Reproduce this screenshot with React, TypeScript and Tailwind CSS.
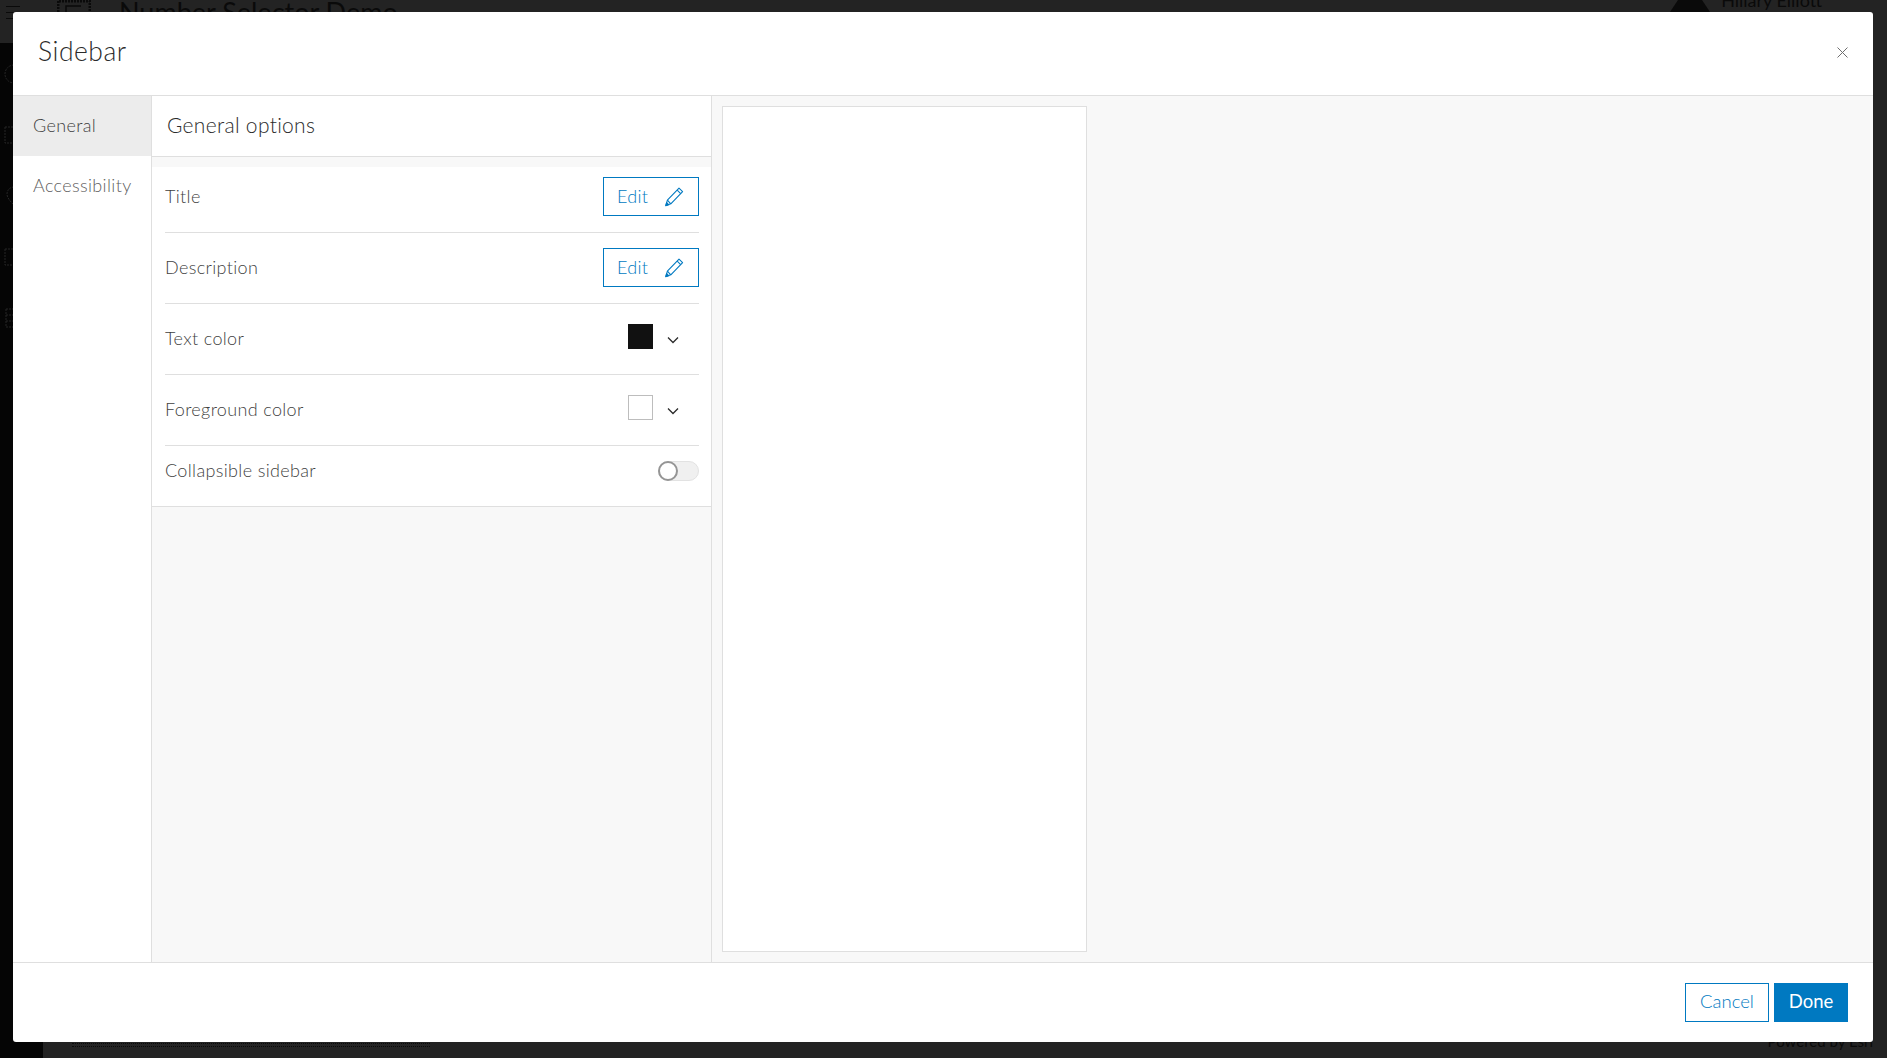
import React from "react";

const font = { fontFamily: "Lato, 'Open Sans', sans-serif" };

function Pencil() {
  return (
    <svg width="20" height="20" viewBox="0 0 20 20" fill="none" stroke="#0079c1" strokeWidth="1.1" strokeLinejoin="round">
      <path d="M15 1.2 18.6 4.6 6.8 16.8 1.8 18.6 3.4 13.2Z" />
      <path d="M13.2 3.1 16.7 6.6" />
      <path d="M3.4 13.2 6.8 16.8" />
      <path d="M1.8 18.6 2.6 15.6 4.8 17.8Z" fill="#0079c1" />
    </svg>
  );
}

function Chevron() {
  return (
    <svg className="mt-[5px]" width="12" height="8" viewBox="0 0 12 8" fill="none" stroke="#2b2b2b" strokeWidth="1.3">
      <path d="M1 1.5 6 6.5 11 1.5" />
    </svg>
  );
}

function EditButton() {
  return (
    <button className="flex h-[39px] w-[96px] items-center justify-between border border-[#0079c1] bg-white pl-[13px] pr-[14px] text-[18px] font-light tracking-[0.3px] text-[#0079c1]">
      <span className="-mt-[1px]">Edit</span>
      <Pencil />
    </button>
  );
}

function Row({ label, className, children }: { label: string; className: string; children: React.ReactNode }) {
  return (
    <div className={`flex items-center justify-between border-b border-[#dfdfdf] ${className}`}>
      <span className="text-[18px] font-light tracking-[0.35px] text-[#3f3f3f]">{label}</span>
      {children}
    </div>
  );
}

function FaintIcon({ d }: { d: string }) {
  return (
    <svg width="24" height="24" viewBox="0 0 24 24" fill="none" stroke="#262626" strokeWidth="1" strokeDasharray="2 1">
      <path d={d} />
    </svg>
  );
}

export default function App() {
  return (
    <div style={font} className="relative flex h-[1058px] w-[1887px] flex-col overflow-hidden bg-[#232323]">
      {/* page behind the dialog */}
      <div className="flex h-[43px] shrink-0 items-start bg-[#232323]">
        <div className="ml-[6px] mt-[6px] flex w-[14px] flex-col gap-[5px]">
          <span className="h-px bg-[#0a0a0a]" />
          <span className="h-px bg-[#0a0a0a]" />
          <span className="h-px bg-[#0a0a0a]" />
        </div>
        <svg className="ml-[37px]" width="34" height="12" viewBox="0 0 34 12" fill="none" stroke="#0a0a0a" strokeWidth="3" strokeDasharray="2 1">
          <path d="M1 12V1H33V12" />
          <path d="M9 12V6H24" strokeDasharray="none" strokeWidth="1.5" />
        </svg>
        <span className="ml-[28px] -mt-[2px] text-[27px] leading-none text-[#0a0a0a]">Number Selector Demo</span>
        <svg className="ml-auto" width="40" height="12" viewBox="0 0 40 12" fill="#0a0a0a">
          <path d="M8 0H32L40 12H0Z" />
        </svg>
        <span className="ml-[11px] mr-[65px] -mt-[12px] text-[18px] leading-[24px] text-[#0a0a0a]">Hillary Elliott</span>
      </div>
      <div className="flex min-h-0 flex-1">
        <aside className="flex w-[43px] shrink-0 flex-col items-start gap-[37px] bg-[#050505] pl-[2px] pt-[19px]">
          <FaintIcon d="M12 3a9 9 0 1 0 0 18a9 9 0 1 0 0-18" />
          <FaintIcon d="M3 4H21V20H3Z" />
          <FaintIcon d="M12 3a7 7 0 0 0-7 7c0 5 7 11 7 11s7-6 7-11a7 7 0 0 0-7-7" />
          <FaintIcon d="M3 4H21V20H3Z" />
          <FaintIcon d="M4 3H20V21H4ZM4 9H20M4 15H20" />
        </aside>
        <div className="flex min-w-0 flex-1 flex-col justify-end">
          <div className="flex h-[15px] items-start justify-between pl-[29px] pr-[14px] text-[15px] leading-[20px] text-[#0a0a0a]">
            <span className="h-[4px] w-[358px] border-y border-dotted border-[#0a0a0a]" />
            <span className="-mt-[12px]">Powered by Esri</span>
          </div>
        </div>
      </div>

      {/* dialog */}
      <div className="absolute left-[13px] top-[12px] flex h-[1030px] w-[1860px] flex-col overflow-hidden rounded-[3px] bg-white">
        <header className="flex h-[84px] shrink-0 items-center justify-between border-b border-[#dfdfdf] pb-[3px] pl-[25px] pr-[25px]">
          <h1 className="text-[26.5px] font-light tracking-[0.5px] text-[#2b2b2b]">Sidebar</h1>
          <svg width="11" height="11" viewBox="0 0 11 11" stroke="#6e6e6e" strokeWidth="1">
            <path d="M.5.5l10 10M10.5.5l-10 10" />
          </svg>
        </header>

        <div className="flex min-h-0 flex-1">
          <nav className="w-[139px] shrink-0 border-r border-[#dfdfdf] text-[18px] font-light tracking-[0.35px]">
            <div className="flex h-[60px] items-center bg-[#ececec] pb-[2px] pl-[20px] text-[#3f3f3f]">General</div>
            <div className="flex h-[60px] items-center pb-[2px] pl-[20px] text-[#5f5f5f]">Accessibility</div>
          </nav>

          <section className="flex w-[560px] shrink-0 flex-col border-r border-[#dfdfdf] bg-[#f8f8f8]">
            <div className="flex h-[61px] shrink-0 items-center border-b border-[#dfdfdf] bg-white pb-[3px] pl-[15px] text-[21px] font-light tracking-[0.3px] text-[#2b2b2b]">
              General options
            </div>
            <div className="mt-[10px] border-b border-[#dfdfdf] bg-white pl-[13px] pr-[12px]">
              <Row label="Title" className="h-[66px] pb-[6px]"><EditButton /></Row>
              <Row label="Description" className="h-[71px] pb-[1px]"><EditButton /></Row>
              <Row label="Text color" className="h-[71px] pb-[1px]">
                <div className="flex items-start gap-[14px] pb-[4px] pr-[20px]">
                  <span className="h-[25px] w-[25px] bg-[#111111]" />
                  <span className="pt-[7px]"><Chevron /></span>
                </div>
              </Row>
              <Row label="Foreground color" className="h-[71px] pb-[1px]">
                <div className="flex items-start gap-[14px] pb-[4px] pr-[20px]">
                  <span className="h-[25px] w-[25px] border border-[#bdbdbd] bg-white" />
                  <span className="pt-[7px]"><Chevron /></span>
                </div>
              </Row>
              <div className="flex h-[60px] items-center justify-between pb-[11px]">
                <span className="text-[18px] font-light tracking-[0.35px] text-[#3f3f3f]">Collapsible sidebar</span>
                <span className="relative h-[20px] w-[41px] rounded-full border border-[#e2e2e2] bg-[#f0f0f0]">
                  <span className="absolute -left-px -top-px h-[20px] w-[20px] rounded-full border-2 border-[#959595] bg-white" />
                </span>
              </div>
            </div>
          </section>

          <main className="min-w-0 flex-1 bg-[#f8f8f8] p-[10px]">
            <div className="h-full w-[365px] border border-[#dfdfdf] bg-white" />
          </main>
        </div>

        <footer className="flex h-[80px] shrink-0 items-center justify-end gap-[5px] border-t border-[#dfdfdf] pr-[25px] text-[18.5px]">
          <button className="h-[39px] w-[84px] border border-[#0079c1] bg-white pb-[2px] font-light text-[#0079c1]">Cancel</button>
          <button className="h-[39px] w-[74px] bg-[#0079c1] pb-[2px] text-white">Done</button>
        </footer>
      </div>
    </div>
  );
}
